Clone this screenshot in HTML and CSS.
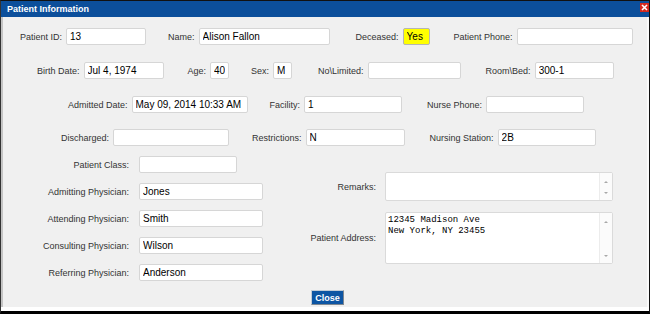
FILE: index.html
```html
<!DOCTYPE html>
<html lang="en">
<head>
    <meta charset="UTF-8">
    <meta name="viewport" content="width=device-width, initial-scale=1.0">
    <title>Patient Information</title>
    <link rel="stylesheet" href="styles.css">
</head>
<body>
    <div class="dialog">
        <div class="titlebar">
            <span class="title">Patient Information</span>
            <svg class="x-btn" width="9" height="9" viewBox="0 0 9 9">
                <rect x="0" y="0" width="9" height="9" fill="#d42a1e"/>
                <path d="M2 2 L7 7 M7 2 L2 7" stroke="#fff" stroke-width="1.6"/>
            </svg>
        </div>

        <div class="content">
            <div class="row row1">
                <label>Patient ID:</label><input class="w80" type="text" value="13">
                <label class="sp22">Name:</label><input class="w131" type="text" value="Alison Fallon">
                <label class="sp26">Deceased:</label><input class="w27 alert" type="text" value="Yes">
                <label class="sp24">Patient Phone:</label><input class="w116" type="text" value="">
            </div>

            <div class="row row2">
                <label>Birth Date:</label><input class="w80" type="text" value="Jul 4, 1974">
                <label class="sp24">Age:</label><input class="w19" type="text" value="40">
                <label class="sp22">Sex:</label><input class="w19" type="text" value="M">
                <label class="sp26">No\Limited:</label><input class="w93" type="text" value="">
                <label class="sp25">Room\Bed:</label><input class="w79" type="text" value="300-1">
            </div>

            <div class="row row3">
                <label>Admitted Date:</label><input class="w116" type="text" value="May 09, 2014 10:33 AM">
                <label class="sp22">Facility:</label><input class="w98" type="text" value="1">
                <label class="sp25">Nurse Phone:</label><input class="w98" type="text" value="">
            </div>

            <div class="row row4">
                <label>Discharged:</label><input class="w116" type="text" value="">
                <label class="sp23">Restrictions:</label><input class="w99" type="text" value="N">
                <label class="sp25">Nursing Station:</label><input class="w98" type="text" value="2B">
            </div>

            <div class="lower">
                <div class="left-col">
                    <div class="line"><label>Patient Class:</label><input class="w98" type="text" value=""></div>
                    <div class="line"><label>Admitting Physician:</label><input class="w124" type="text" value="Jones"></div>
                    <div class="line"><label>Attending Physician:</label><input class="w124" type="text" value="Smith"></div>
                    <div class="line"><label>Consulting Physician:</label><input class="w124" type="text" value="Wilson"></div>
                    <div class="line"><label>Referring Physician:</label><input class="w124" type="text" value="Anderson"></div>
                </div>

                <div class="right-col">
                    <div class="line">
                        <label>Remarks:</label>
                        <div class="textbox short">
                            <div class="textbox-text"></div>
                            <div class="scroll"><span class="up"></span><span class="down"></span></div>
                        </div>
                    </div>
                    <div class="line">
                        <label>Patient Address:</label>
                        <div class="textbox tall">
                            <div class="textbox-text mono">12345 Madison Ave<br>New York, NY 23455</div>
                            <div class="scroll"><span class="up"></span><span class="down"></span></div>
                        </div>
                    </div>
                </div>
            </div>

            <div class="actions">
                <button class="btn-close">Close</button>
            </div>
        </div>
    </div>
</body>
</html>
```

FILE: styles.css
```css
body { margin: 0; background: #fff; font-family: "Liberation Sans", Arial, sans-serif; }
.dialog { box-sizing: border-box; width: 650px; height: 314px; border-top: 1px solid #111; border-left: 1px solid #333; border-right: 1px solid #111; border-bottom: 3px solid #000; background: #fff; display: flex; flex-direction: column; }
.titlebar { height: 16px; background: #0c4f9b; display: flex; align-items: center; justify-content: space-between; padding-left: 6px; }
.title { color: #fff; font-weight: bold; font-size: 9px; }
.x-btn { display: block; margin-top: -4px; }
.content { box-sizing: border-box; height: 290px; background: #f0f0f0; border-left: 2px solid #c4c4c4; border-right: 2px solid #fafafa; padding-top: 11px; padding-bottom: 2px; }

label { font-size: 9px; color: #333; white-space: nowrap; }
input { box-sizing: border-box; height: 17px; margin: 0 0 0 4px; padding: 0 3px; border: 1px solid #d6d6d6; border-radius: 2px; background: #fff; font-family: "Liberation Sans", Arial, sans-serif; font-size: 10px; color: #000; outline: none; }
input.alert { background: #ffff00; border-color: #b5b5b5; }

.w19 { width: 19px; }
.w27 { width: 27px; }
.w79 { width: 79px; }
.w80 { width: 80px; }
.w93 { width: 93px; }
.w98 { width: 98px; }
.w99 { width: 99px; }
.w116 { width: 116px; }
.w124 { width: 124px; }
.w131 { width: 131px; }

.sp22 { margin-left: 22px; }
.sp23 { margin-left: 23px; }
.sp24 { margin-left: 24px; }
.sp25 { margin-left: 25px; }
.sp26 { margin-left: 26px; }

.row { display: flex; align-items: center; height: 17px; }
.row1 { padding-left: 17px; margin-bottom: 17px; }
.row2 { padding-left: 34px; margin-bottom: 17px; }
.row3 { padding-left: 65px; margin-bottom: 16px; }
.row4 { padding-left: 58px; margin-bottom: 10px; }

.lower { display: flex; }
.left-col { display: flex; flex-direction: column; gap: 10px; }
.left-col .line { display: flex; align-items: center; height: 17px; }
.left-col label { width: 126px; text-align: right; }
.left-col input { margin-left: 10px; }

.right-col { display: flex; flex-direction: column; gap: 11px; margin-left: 13px; padding-top: 16px; }
.right-col .line { display: flex; align-items: center; }
.right-col label { width: 100px; text-align: right; margin-right: 9px; }

.textbox { box-sizing: border-box; width: 228px; display: flex; border: 1px solid #dadada; border-radius: 2px; background: #fff; }
.textbox.short { height: 29px; }
.textbox.tall { height: 52px; }
.textbox-text { flex: 1; padding: 2px 2px; font-size: 9px; line-height: 11px; color: #000; }
.mono { font-family: "Liberation Mono", "Courier New", monospace; }
.scroll { width: 13px; border-left: 1px solid #ececec; background: #fbfbfb; display: flex; flex-direction: column; justify-content: space-between; align-items: center; padding: 8px 0 6px; box-sizing: border-box; }
.up { width: 0; height: 0; border-left: 2px solid transparent; border-right: 2px solid transparent; border-bottom: 2px solid #a8a8a8; }
.down { width: 0; height: 0; border-left: 2px solid transparent; border-right: 2px solid transparent; border-top: 2px solid #a8a8a8; }

.actions { display: flex; justify-content: center; padding-left: 5px; margin-top: 9px; }
.btn-close { box-sizing: border-box; width: 33px; height: 15px; padding: 0; background: #0d55a3; color: #fff; font-family: "Liberation Sans", Arial, sans-serif; font-weight: bold; font-size: 9px; border: 1px solid #c2ccd6; border-right-color: #808890; border-bottom-color: #808890; cursor: pointer; }
```
